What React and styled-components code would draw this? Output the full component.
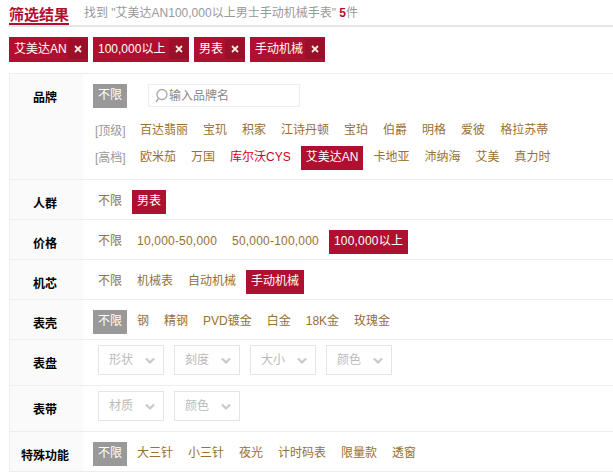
import React from "react";
import styled, { createGlobalStyle } from "styled-components";

const GlobalStyle = createGlobalStyle`
  html, body {
    margin: 0;
    padding: 0;
    background: #fff;
    overflow: hidden;
    font-family: "Liberation Sans", "Noto Sans CJK SC", sans-serif;
    font-size: 12px;
  }
`;

const Page = styled.div`
  width: 613px;
  height: 473px;
  overflow: hidden;
`;

const Header = styled.div`
  display: flex;
  align-items: flex-end;
  height: 25px;
  margin-left: 9px;
  border-bottom: 2px solid #e5e5e5;
`;

const Title = styled.h2`
  margin: 0;
  height: 23px;
  line-height: 29px;
  width: 60px;
  font-size: 15px;
  font-weight: bold;
  color: #b0102f;
  border-bottom: 2px solid #b0102f;
  overflow: hidden;
`;

const Summary = styled.span`
  margin-left: 15px;
  line-height: 24px;
  color: #999;
  white-space: nowrap;
  b {
    color: #b0102f;
  }
`;

const Chips = styled.div`
  display: flex;
  gap: 5px;
  margin: 10px 0 0 9px;
  height: 25px;
`;

const Chip = styled.div`
  display: flex;
  align-items: center;
  justify-content: space-between;
  width: ${(p) => p.$w}px;
  height: 25px;
  padding-left: 5px;
  box-sizing: border-box;
  background: #b0102f;
  color: #fff;
  line-height: 25px;
  white-space: nowrap;
`;

const ChipClose = styled.span`
  display: flex;
  align-items: center;
  justify-content: center;
  width: 20px;
  height: 20px;
  margin-bottom: 1px;
  background: #9a0f2a;
  svg {
    display: block;
  }
`;

const Table = styled.div`
  margin: 11px 0 0 9px;
  border-top: 1px solid #eee;
  border-left: 1px solid #eee;
`;

const Row = styled.div`
  display: flex;
  height: ${(p) => p.$h}px;
  border-bottom: 1px solid #eee;
`;

const Label = styled.div`
  flex: none;
  width: 73px;
  display: flex;
  align-items: ${(p) => (p.$top ? "flex-start" : "center")};
  justify-content: center;
  padding: ${(p) => p.$top || 0}px 3px 0 0;
  box-sizing: border-box;
  background: #fafafa;
  font-weight: bold;
  color: #000;
`;

const Body = styled.div`
  flex: 1;
  min-width: 0;
  padding: ${(p) => p.$top ?? 10}px 0 0 10px;
`;

const Line = styled.div`
  display: flex;
  align-items: center;
  height: 24px;
  margin-bottom: ${(p) => p.$gap || 0}px;
  white-space: nowrap;
`;

const Option = styled.span`
  display: inline-block;
  height: 24px;
  line-height: 22px;
  padding: 0 5px;
  margin-right: 5px;
  color: #996f33;
  letter-spacing: ${(p) => (p.$num ? "0.2px" : "normal")};
  &[data-state="all"] {
    background: #999;
    color: #fff;
  }
  &[data-state="on"] {
    background: #b0102f;
    color: #fff;
  }
  &[data-state="hot"] {
    color: #d0001c;
  }
`;

const Tier = styled.span`
  flex: none;
  width: 40px;
  padding-left: 2px;
  line-height: 22px;
  color: #999;
`;

const Search = styled.div`
  display: flex;
  align-items: center;
  width: 152px;
  height: 23px;
  margin: 0 0 1px 16px;
  padding-left: 5px;
  box-sizing: border-box;
  border: 1px solid #eee;
  color: #888;
  line-height: 20px;
  svg {
    margin-right: 1px;
  }
`;

const Selects = styled.div`
  display: flex;
  gap: 10px;
  padding-left: 5px;
`;

const Select = styled.div`
  display: flex;
  align-items: center;
  justify-content: space-between;
  width: 66px;
  height: 30px;
  padding: 0 8px 0 10px;
  box-sizing: border-box;
  border: 1px solid #e5e5e5;
  color: #bbb;
  span {
    margin-top: -3px;
  }
  svg {
    margin-top: 2px;
  }
`;

const SearchIcon = () => (
  <svg width="14" height="16" viewBox="0 0 14 16" fill="none" stroke="#aaa" strokeWidth="1.3">
    <circle cx="8" cy="6.5" r="5" />
    <path d="M4.5 10.5 L2 14" />
  </svg>
);

const Chevron = () => (
  <svg width="10" height="8" viewBox="0 0 10 8" fill="none" stroke="#c8c8c8" strokeWidth="2.2">
    <path d="M1 1.5 L5 5.5 L9 1.5" />
  </svg>
);

const Close = () => (
  <svg width="8" height="8" viewBox="0 0 8 8" stroke="#f5ecd9" strokeWidth="1.8">
    <path d="M1 1 L7 7 M7 1 L1 7" />
  </svg>
);

const chips = [
  { t: "艾美达AN", w: 79 },
  { t: "100,000以上", w: 96 },
  { t: "男表", w: 51 },
  { t: "手动机械", w: 75 },
];

const renderOptions = (items) =>
  items.map((o) => {
    const text = typeof o === "string" ? o : o.t;
    return (
      <Option key={text} data-state={o.s} $num={o.num}>
        {text}
      </Option>
    );
  });

const renderSelects = (items) => (
  <Selects>
    {items.map((s) => (
      <Select key={s}>
        <span>{s}</span>
        <Chevron />
      </Select>
    ))}
  </Selects>
);

export default function App() {
  return (
    <Page>
      <GlobalStyle />
      <Header>
        <Title>筛选结果</Title>
        <Summary>
          找到 "艾美达AN100,000以上男士手动机械手表" <b>5</b>件
        </Summary>
      </Header>
      <Chips>
        {chips.map((c) => (
          <Chip key={c.t} $w={c.w}>
            {c.t}
            <ChipClose>
              <Close />
            </ChipClose>
          </Chip>
        ))}
      </Chips>
      <Table>
        <Row $h={105}>
          <Label $top={14}>品牌</Label>
          <Body>
            <Line $gap={11}>
              <Option data-state="all">不限</Option>
              <Search>
                <SearchIcon />
                输入品牌名
              </Search>
            </Line>
            <Line $gap={3}>
              <Tier>[顶级]</Tier>
              {renderOptions(["百达翡丽", "宝玑", "积家", "江诗丹顿", "宝珀", "伯爵", "明格", "爱彼", "格拉苏蒂"])}
            </Line>
            <Line>
              <Tier>[高档]</Tier>
              {renderOptions(["欧米茄", "万国", { t: "库尔沃CYS", s: "hot" }, { t: "艾美达AN", s: "on" }, "卡地亚", "沛纳海", "艾美", "真力时"])}
            </Line>
          </Body>
        </Row>
        <Row $h={39}>
          <Label $top={14}>人群</Label>
          <Body>
            <Line>{renderOptions(["不限", { t: "男表", s: "on" }])}</Line>
          </Body>
        </Row>
        <Row $h={39}>
          <Label $top={14}>价格</Label>
          <Body>
            <Line>
              {renderOptions([
                "不限",
                { t: "10,000-50,000", num: true },
                { t: "50,000-100,000", num: true },
                { t: "100,000以上", s: "on", num: true },
              ])}
            </Line>
          </Body>
        </Row>
        <Row $h={39}>
          <Label $top={14}>机芯</Label>
          <Body>
            <Line>{renderOptions(["不限", "机械表", "自动机械", { t: "手动机械", s: "on" }])}</Line>
          </Body>
        </Row>
        <Row $h={39}>
          <Label $top={14}>表壳</Label>
          <Body>
            <Line>{renderOptions([{ t: "不限", s: "all" }, "钢", "精钢", "PVD镀金", "白金", "18K金", "玫瑰金"])}</Line>
          </Body>
        </Row>
        <Row $h={45}>
          <Label>表盘</Label>
          <Body $top={5}>{renderSelects(["形状", "刻度", "大小", "颜色"])}</Body>
        </Row>
        <Row $h={45}>
          <Label>表带</Label>
          <Body $top={5}>{renderSelects(["材质", "颜色"])}</Body>
        </Row>
        <Row $h={39}>
          <Label $top={14}>特殊功能</Label>
          <Body>
            <Line>{renderOptions([{ t: "不限", s: "all" }, "大三针", "小三针", "夜光", "计时码表", "限量款", "透窗"])}</Line>
          </Body>
        </Row>
      </Table>
    </Page>
  );
}
